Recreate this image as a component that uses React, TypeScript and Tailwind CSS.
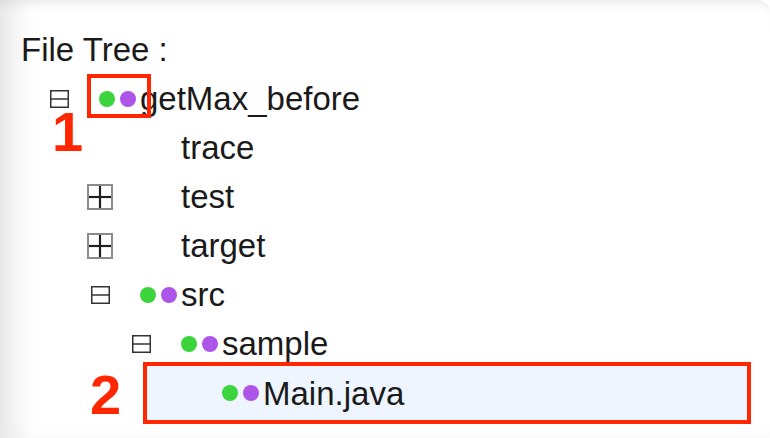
import React from "react";

type Node = {
  label: string;
  level: number;
  toggle?: "open" | "closed";
  dots?: boolean;
  selected?: boolean;
};

const nodes: Node[] = [
  { label: "getMax_before", level: 0, toggle: "open", dots: true },
  { label: "trace", level: 1 },
  { label: "test", level: 1, toggle: "closed" },
  { label: "target", level: 1, toggle: "closed" },
  { label: "src", level: 1, toggle: "open", dots: true },
  { label: "sample", level: 2, toggle: "open", dots: true },
  { label: "Main.java", level: 3, dots: true, selected: true },
];

const indent = ["pl-[46px]", "pl-[87px]", "pl-[128px]", "pl-[169px]"];

function MinusBox() {
  return (
    <svg width="19" height="18" viewBox="0 0 19 18">
      <rect x="0.75" y="0.75" width="17.5" height="16.5" fill="none" stroke="#333" strokeWidth="1.5" />
      <line x1="0.75" y1="9" x2="18.25" y2="9" stroke="#333" strokeWidth="1.5" />
    </svg>
  );
}

function PlusBox() {
  return (
    <svg width="26" height="26" viewBox="0 0 26 26">
      <rect x="1" y="1" width="24" height="24" fill="none" stroke="#8a8a8a" strokeWidth="2" />
      <line x1="2" y1="13" x2="24" y2="13" stroke="#1e1e1e" strokeWidth="2.2" />
      <line x1="13" y1="2" x2="13" y2="24" stroke="#1e1e1e" strokeWidth="2.2" />
    </svg>
  );
}

function Dots({ show }: { show?: boolean }) {
  return (
    <div className="flex w-[41px] shrink-0 items-center gap-[5px]">
      {show && (
        <>
          <span className="h-[16px] w-[16px] rounded-full bg-[#3bd43c]" />
          <span className="h-[16px] w-[16px] rounded-full bg-[#ad55e8]" />
        </>
      )}
    </div>
  );
}

function Row({ node }: { node: Node }) {
  const inner = (
    <>
      <div className="flex w-[26px] shrink-0 items-center justify-center">
        {node.toggle === "open" && <MinusBox />}
        {node.toggle === "closed" && <PlusBox />}
      </div>
      <div className="w-[27px] shrink-0" />
      <Dots show={node.dots} />
      <span>{node.label}</span>
    </>
  );
  if (node.selected) {
    return (
      <div className="flex h-[49px] items-center">
        <div className="ml-[143px] mr-[19px] mt-[1px] flex h-[62px] flex-1 items-center border-4 border-[#ff2600] bg-[#eef5fe] pl-[22px]">
          {inner}
        </div>
      </div>
    );
  }
  return <div className={`flex h-[49px] items-center ${indent[node.level]}`}>{inner}</div>;
}

export default function App() {
  return (
    <div
      className="relative min-h-[438px] w-full overflow-hidden rounded-tr-xl bg-white text-[33px] leading-[49px] text-[#1a1a1a] shadow-[inset_26px_0_28px_-14px_rgba(0,0,0,0.11),inset_0_10px_12px_-8px_rgba(0,0,0,0.08)]"
      style={{ fontFamily: '"Liberation Sans", Arial, sans-serif' }}
    >
      <div className="pt-[25px]">
        <div className="pl-[21px]">File Tree :</div>
        <div className="flex flex-col">
          {nodes.map((n) => (
            <Row key={n.label} node={n} />
          ))}
        </div>
      </div>

      <div className="absolute left-[87px] top-[74px] h-[44px] w-[64px] border-4 border-[#ff2600]" />
      <div className="absolute left-[52px] top-[104px] text-[56px] font-bold leading-none text-[#ff2600]">1</div>
      <div className="absolute left-[90px] top-[367px] text-[56px] font-bold leading-none text-[#ff2600]">2</div>
    </div>
  );
}
